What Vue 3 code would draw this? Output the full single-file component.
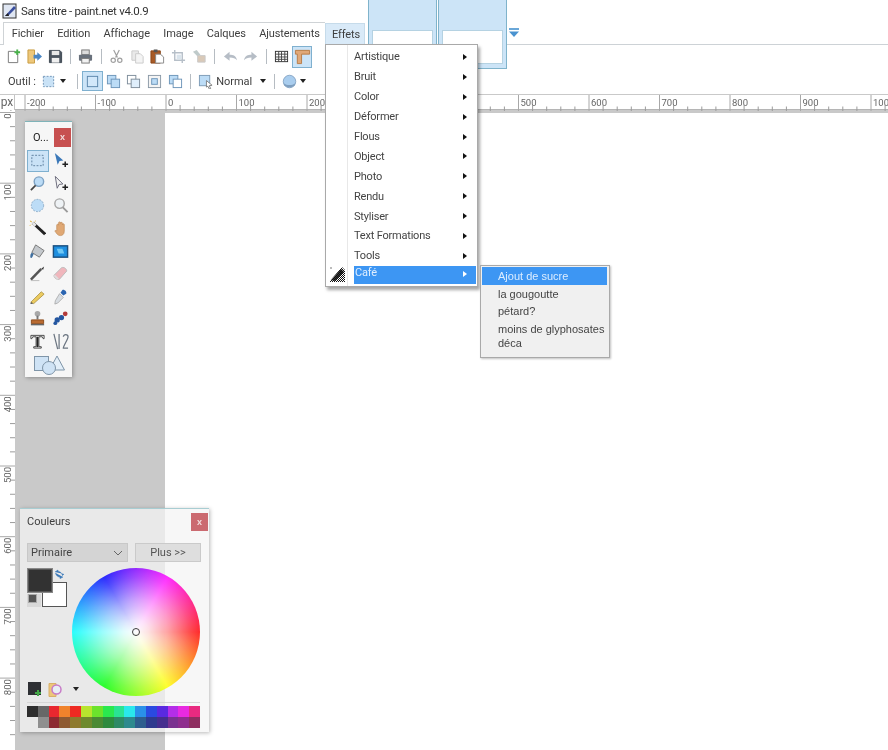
<script setup>
const hMajor = [];
const hMinor = [];
for (let v = -240; v <= 1040; v += 20) {
  const x = 166 + v * 0.705;
  if (v % 100 === 0) hMajor.push({ v, x });
  else hMinor.push({ x, tall: (v % 100 + 100) % 100 === 20 });
}
const vMajor = [];
const vMinor = [];
for (let v = 0; v <= 880; v += 20) {
  const y = 2.5 + v * 0.707;
  if (v % 100 === 0) vMajor.push({ v, y });
  else vMinor.push({ y });
}
const row1 = ['#2e2e2e','#676767','#e8272f','#f0832c','#ee2a22','#b8e42e','#6ce32c','#2ae84e','#2ae393','#2ae8ec','#2a90e8','#2a4ae0','#5a2ae0','#b42ee8','#e82ae0','#e82a80'];
const row2 = ['transparent','#8f8f8f','#8c2a32','#8e5a32','#8e7a2e','#6e8a2e','#4a8a34','#2e8a3e','#2e8a66','#2e8a8e','#2e5e8e','#2e3a8e','#462e8e','#7a3290','#8e2e8e','#8e2e60'];
const items = ['Artistique','Bruit','Color','Déformer','Flous','Object','Photo','Rendu','Styliser','Text Formations','Tools'];
</script>

<template>
  <div class="app">
    <header class="titlebar">
      <svg class="appicon" viewBox="0 0 16 16" width="16" height="16">
        <rect x="1" y="1" width="13" height="14" fill="#dfe6f2" stroke="#333"/>
        <path d="M3 13 L12 3 L14 5 L6 13 Z" fill="#3a4f9e"/>
        <path d="M3 13 L6 10 L7 13 Z" fill="#222"/>
      </svg>
      <span>Sans titre - paint.net v4.0.9</span>
    </header>

    <nav class="menubar">
      <div class="mb-edge"></div>
      <div class="mb-tabs">
        <span class="mi">Fichier</span><span class="mi">Edition</span><span class="mi">Affichage</span><span class="mi">Image</span><span class="mi">Calques</span><span class="mi">Ajustements</span>
      </div>
      <span class="mi mi-active">Effets</span>
      <div class="mb-rest"></div>
    </nav>

    <div class="toolbar tb1">
      <span class="slot"><svg viewBox="0 0 16 16"><path d="M2.5 2.5h7l3 3v9h-10z" fill="#fff" stroke="#777"/><path d="M11 .5h2v2h2v2h-2v2h-2v-2H9v-2h2z" fill="#49b04a"/></svg></span>
      <span class="slot"><svg viewBox="0 0 16 16"><path d="M1 1h7v14H1z" fill="#edc77a" stroke="#c99a3f"/><path d="M7 6h4V3.5L16 8l-5 4.500V10H7z" fill="#4a86c4"/></svg></span>
      <span class="slot"><svg viewBox="0 0 16 16"><path d="M1.500 1.500h11l2 2v11h-13z" fill="#4c5560" stroke="#3c4550"/><rect x="4" y="2" width="8" height="4.500" fill="#e8e8e8"/><rect x="4" y="9.500" width="8" height="5" fill="#f0f0f0"/></svg></span>
      <i class="sep"></i>
      <span class="slot"><svg viewBox="0 0 16 16"><rect x="4" y="1" width="8" height="5" fill="#ddd" stroke="#777"/><rect x="1" y="6" width="14" height="6.500" rx="1" fill="#69717c"/><rect x="4" y="10" width="8" height="5" fill="#f2f2f2" stroke="#777"/></svg></span>
      <i class="sep"></i>
      <span class="slot faded"><svg viewBox="0 0 16 16"><path d="M5 1l4 8M11 1L7 9" stroke="#666" stroke-width="1.300" fill="none"/><circle cx="4.500" cy="12" r="2.300" fill="none" stroke="#666" stroke-width="1.300"/><circle cx="11.500" cy="12" r="2.300" fill="none" stroke="#666" stroke-width="1.300"/></svg></span>
      <span class="slot faded"><svg viewBox="0 0 16 16"><path d="M2 2h7v10H2z" fill="#ddd" stroke="#aaa"/><path d="M6 5h5l3 3v7H6z" fill="#eee" stroke="#aaa"/></svg></span>
      <span class="slot"><svg viewBox="0 0 16 16"><path d="M1 2h10v13H1z" fill="#a85a26" stroke="#8a4518"/><rect x="4" y="0.500" width="4" height="3" fill="#555"/><path d="M6 5.500h5l3.500 3v6.500H6z" fill="#fff" stroke="#888"/></svg></span>
      <span class="slot faded"><svg viewBox="0 0 16 16"><path d="M4 1v11h11M1 4h11v11" fill="none" stroke="#8a98a8" stroke-width="1.500"/><rect x="6" y="6" width="5" height="5" fill="#c4d4e2"/></svg></span>
      <span class="slot faded"><svg viewBox="0 0 16 16"><path d="M1 3l4-2 4 5-3 2z" fill="#9aa"/><path d="M6 7h8v7H6z" fill="#c2a98e" stroke="#aaa"/></svg></span>
      <i class="sep"></i>
      <span class="slot faded"><svg viewBox="0 0 16 16"><path d="M1 8l6-5v3c4 0 7 1 8 6-2-2-4-3-8-3v3.500z" fill="#8a96a4"/></svg></span>
      <span class="slot faded"><svg viewBox="0 0 16 16"><path d="M15 8L9 3v3C5 6 2 7 1 12c2-2 4-3 8-3v3.500z" fill="#8a96a4"/></svg></span>
      <i class="sep"></i>
      <span class="slot"><svg viewBox="0 0 16 16"><rect x="1.500" y="2.500" width="13" height="11" fill="#fff" stroke="#333"/><path d="M1.500 5.500h13M1.500 8.500h13M1.500 11h13M5 2.500v11M8 2.500v11M11.500 2.500v11" stroke="#444"/></svg></span>
      <span class="slot on wide"><svg viewBox="0 0 18 18"><path d="M1.500 2.500h15v4H8v10H3.500v-10h-2z" fill="#e0a878" stroke="#b87b46"/></svg></span>
    </div>

    <div class="toolbar tb2">
      <span class="lbl">Outil :</span>
      <span class="slot tool"><svg viewBox="0 0 16 16"><rect x="2.500" y="2.500" width="11" height="11" fill="#c9e2f6" stroke="#6f93b5" stroke-dasharray="2 1.500"/></svg></span>
      <i class="caret"></i>
      <i class="sep"></i>
      <span class="slot on mode"><svg viewBox="0 0 16 16"><rect x="2.500" y="2.500" width="11" height="11" fill="#d2e8fa" stroke="#5a85ab"/></svg></span>
      <span class="slot"><svg viewBox="0 0 16 16"><rect x="1.500" y="1.500" width="9" height="9" fill="#bcdcf6" stroke="#6c94b8"/><rect x="5.500" y="5.500" width="9" height="9" fill="#bcdcf6" stroke="#6c94b8"/></svg></span>
      <span class="slot"><svg viewBox="0 0 16 16"><rect x="1.500" y="1.500" width="9" height="9" fill="#fff" stroke="#7d8c9a"/><rect x="5.500" y="5.500" width="9" height="9" fill="#dfeefb" stroke="#7d8c9a"/></svg></span>
      <span class="slot"><svg viewBox="0 0 16 16"><rect x="1.500" y="1.500" width="13" height="13" fill="#f4f4f4" stroke="#8a98a6"/><rect x="5" y="5" width="6" height="6" fill="#bcdcf6" stroke="#6c94b8"/></svg></span>
      <span class="slot"><svg viewBox="0 0 16 16"><rect x="1.500" y="1.500" width="9" height="9" fill="#bcdcf6" stroke="#6c94b8"/><rect x="5.500" y="5.500" width="9" height="9" fill="#fff" stroke="#6c94b8"/></svg></span>
      <i class="sep"></i>
      <span class="slot"><svg viewBox="0 0 16 16"><rect x="1.500" y="1.500" width="11" height="11" fill="#bcdcf6" stroke="#7d9ab5"/><path d="M9 7l6 5-3 .5 1.500 3-1.500.5-1.500-3L9 14z" fill="#fff" stroke="#666" stroke-width=".8"/></svg></span>
      <span class="lbl normal">Normal</span>
      <i class="caret caret2"></i>
      <i class="sep"></i>
      <span class="slot"><svg viewBox="0 0 18 18"><circle cx="9" cy="9" r="7.500" fill="#a9cdee" stroke="#7f9fbf"/><path d="M2 11c4 3 10 3 14 0l-1 3-4 2H7l-4-2z" fill="#7f9fbf"/></svg></span>
      <i class="caret caret3"></i>
    </div>

    <div class="hruler">
      <svg width="888" height="16">
        <g v-for="t in hMajor" :key="t.v">
          <line :x1="t.x" :x2="t.x" y1="0" y2="16" stroke="#a8a8a8"/>
          <text :x="t.x + 2" y="10.500" class="rt">{{ t.v }}</text>
        </g>
        <line v-for="t in hMinor" :key="t.x" :x1="t.x" :x2="t.x" :y1="t.tall ? 10 : 11.500" y2="16" stroke="#9c9c9c"/>
      </svg>
      <span class="px">px</span>
    </div>

    <main class="work">
      <div class="vruler">
        <svg width="15" height="640">
          <g v-for="t in vMajor" :key="t.v">
            <line x1="0" x2="15" :y1="t.y" :y2="t.y" stroke="#a8a8a8"/>
            <text class="rt" text-anchor="end" :transform="`translate(11 ${t.y + 1}) rotate(-90)`">{{ t.v }}</text>
          </g>
          <line v-for="t in vMinor" :key="t.y" x1="10" x2="15" :y1="t.y" :y2="t.y" stroke="#9c9c9c"/>
        </svg>
      </div>
      <div class="gutter"></div>
      <div class="canvas"></div>
    </main>

    <div class="ghost g1"><div class="ghost-in"></div></div>
    <div class="ghost g2"><div class="ghost-in"></div></div>
    <svg class="more" viewBox="0 0 10 10" width="10" height="10"><path d="M0 0h10v2H0z" fill="#6aa7d8"/><path d="M0 3.500h10L5 9z" fill="#4a93d0"/></svg>

    <div class="menu">
      <div v-for="it in items" :key="it" class="row"><span>{{ it }}</span><i class="tri"></i></div>
      <div class="row row-on"><span>Café</span><i class="tri tri-w"></i></div>
      <svg class="cafe-ic" viewBox="0 0 16 16" width="16" height="16">
        <defs><pattern id="chk" width="2" height="2" patternUnits="userSpaceOnUse"><rect width="2" height="2" fill="#fff"/><rect width="1" height="1" fill="#111"/><rect x="1" y="1" width="1" height="1" fill="#111"/></pattern></defs>
        <path d="M0 16 L13 1 L16 4 V16 Z" fill="url(#chk)"/>
        <path d="M2 14 L12 3 L15 6 L6 15 Z" fill="#111" opacity=".85"/>
        <path d="M1 1h2v2H1z" fill="#bbb"/>
      </svg>
    </div>

    <div class="submenu">
      <div class="sub sub-on">Ajout de sucre</div>
      <div class="sub">la gougoutte</div>
      <div class="sub">pétard?</div>
      <div class="sub sub-last">moins de glyphosates<br>déca</div>
    </div>

    <aside class="tools">
      <div class="tools-head"><span>O...</span><b class="close">x</b></div>
      <div class="tools-grid">
        <span class="t t-on"><svg viewBox="0 0 18 18"><rect x="3" y="3.500" width="12" height="11" fill="#c9e2f6" stroke="#5f7f9e" stroke-dasharray="2 1.500"/></svg></span>
        <span class="t"><svg viewBox="0 0 18 18"><path d="M3 1l9 8-4 .5-2 4z" fill="#3b78b8"/><path d="M11 13h6M14 10v6" stroke="#222" stroke-width="1.600"/></svg></span>
        <span class="t"><svg viewBox="0 0 18 18"><circle cx="10.500" cy="7" r="5" fill="#bcdcf6" stroke="#7da2c4" stroke-width="1.500"/><path d="M7 11l-5 5" stroke="#444" stroke-width="1.800"/></svg></span>
        <span class="t"><svg viewBox="0 0 18 18"><path d="M3.500 1.500l8 8-4 .5-2 4z" fill="#f4f4f4" stroke="#667"/><path d="M11 13h6M14 10v6" stroke="#222" stroke-width="1.600"/></svg></span>
        <span class="t"><svg viewBox="0 0 18 18"><circle cx="9" cy="9" r="6.500" fill="#bcdcf6" stroke="#86a8c6" stroke-dasharray="2 1.200"/></svg></span>
        <span class="t"><svg viewBox="0 0 18 18"><circle cx="8" cy="7" r="5" fill="#eef2f5" stroke="#a6a6a6" stroke-width="1.500"/><path d="M11.500 11l5 5" stroke="#999" stroke-width="2"/></svg></span>
        <span class="t"><svg viewBox="0 0 18 18"><path d="M4 3l13 12" stroke="#222" stroke-width="3"/><path d="M4 3l3 3" stroke="#e6e6e6" stroke-width="3"/><path d="M1 1l2 1M7 1l-1 1M1 6l1-1" stroke="#d9a520"/></svg></span>
        <span class="t"><svg viewBox="0 0 18 18"><path d="M5 10V5.500a1 1 0 0 1 2 0V3a1 1 0 0 1 2 0v.500a1 1 0 0 1 2 0V5a1 1 0 0 1 2 0v7c0 3-2 4.500-4 4.500-3 0-4-2-6-5 1-1 2 0 2 0z" fill="#e0a874" stroke="#c08a56" stroke-width=".7"/></svg></span>
        <span class="t"><svg viewBox="0 0 18 18"><path d="M7 2l9 6-5 7-8-5z" fill="#c4c8cc" stroke="#777"/><path d="M3 10c-2 2-2 5-1 6 2 0 2-3 3-4z" fill="#3f6f9f"/></svg></span>
        <span class="t"><svg viewBox="0 0 18 18"><rect x="1.500" y="3" width="15" height="12" fill="#1e8fe0" stroke="#1b4f7e" stroke-width="1.500"/><path d="M5 6h6l2 5H7z" fill="#70c8f5"/></svg></span>
        <span class="t"><svg viewBox="0 0 18 18"><path d="M2 15.500L13 4" stroke="#555" stroke-width="2.600"/><path d="M13 4l3-2.500-1 3.500z" fill="#333"/><path d="M2 16.500h9" stroke="#bbb"/></svg></span>
        <span class="t"><svg viewBox="0 0 18 18"><path d="M2 11l8-8c2-1.500 6 1 5.500 3.500L8 15c-2 1-6-1-6-4z" fill="#f0b6bc" stroke="#bbb"/><path d="M2.500 11l4 4" stroke="#ddd" stroke-width="2"/></svg></span>
        <span class="t"><svg viewBox="0 0 18 18"><path d="M2 15L13 4l3 2.500L5 16.500z" fill="#eccb60" stroke="#a58b3a" stroke-width=".8"/><path d="M2 15l-.5 2 3-.5z" fill="#444"/></svg></span>
        <span class="t"><svg viewBox="0 0 18 18"><path d="M11 2c2-1 5 2 4 4l-3 2-3-3z" fill="#2a64b0"/><path d="M8 6l4 4-6 6-3 1 .5-3.500z" fill="#d8dde2" stroke="#999" stroke-width=".7"/></svg></span>
        <span class="t"><svg viewBox="0 0 18 18"><circle cx="9" cy="4" r="3" fill="#a8a8a8"/><path d="M8 6h2v4H8z" fill="#777"/><path d="M2.500 10.500h13v4h-13z" fill="#b96a30" stroke="#8a4a1c"/><path d="M2 15.500h14" stroke="#666" stroke-width="1.500"/></svg></span>
        <span class="t"><svg viewBox="0 0 18 18"><circle cx="14" cy="4" r="2.500" fill="#b33a3a"/><circle cx="10" cy="8" r="2.800" fill="#2456a0"/><circle cx="5.500" cy="10.500" r="2.800" fill="#2456a0"/><circle cx="3.500" cy="14" r="2" fill="#2456a0"/></svg></span>
        <span class="t"><svg viewBox="0 0 18 18"><path d="M2 2.500h14v3.500h-1l-1-2H10.500v10.500H13v1.500H5V14.500h2.500V4H4L3 6H2z" fill="#f4f4f4" stroke="#333" stroke-width=".9"/><path d="M8 4h2v11H8z" fill="#222"/></svg></span>
        <span class="t"><svg viewBox="0 0 18 18"><path d="M2 1l4 16M7.500 17V1M12 4c0-3 5-3 5 0 0 3-5 9-5 12h5" fill="none" stroke="#6a7480" stroke-width="1.300"/></svg></span>
        <span class="t t-wide"><svg viewBox="0 0 32 20"><rect x="1" y="1.500" width="14" height="14" fill="#cfe3f5" stroke="#7f95a8"/><path d="M23.500 1L31 15H16z" fill="#e3eff9" stroke="#7f95a8"/><circle cx="15.500" cy="13" r="6.500" fill="#cfe3f5" stroke="#7f95a8"/></svg></span>
      </div>
    </aside>

    <aside class="colors">
      <div class="c-head"><span>Couleurs</span><b class="close close2">x</b></div>
      <div class="c-controls">
        <div class="select"><span>Primaire</span><svg viewBox="0 0 10 6" width="10" height="6"><path d="M1 1l4 4 4-4" fill="none" stroke="#666"/></svg></div>
        <div class="plus">Plus &gt;&gt;</div>
      </div>
      <div class="c-main">
        <div class="swatches">
          <div class="sw-second"></div>
          <div class="sw-first"></div>
          <svg class="swap" viewBox="0 0 10 10" width="10" height="10"><path d="M1 3l3-2v1.500c2 0 4 1.500 4.500 4L10 5M9 8L6 9.500V8C4 8 2 6.500 1.500 4" fill="#3b78b8" stroke="#3b78b8" stroke-width=".6"/></svg>
          <div class="sw-reset"><i></i></div>
        </div>
        <div class="wheel"><div class="wheel-white"></div><i class="marker"></i></div>
      </div>
      <div class="c-tools">
        <svg viewBox="0 0 14 14" width="14" height="14"><rect width="13" height="13" fill="#2e3034"/><path d="M9 8h2v2h2v2h-2v2H9v-2H7v-2h2z" fill="#43a847"/></svg>
        <svg viewBox="0 0 14 14" width="14" height="15"><path d="M1 1h7v13H1z" fill="#edc77a" stroke="#d9b068"/><circle cx="8.500" cy="7" r="4.500" fill="#e8eef5" stroke="#c77ac7" stroke-width="1.500"/></svg>
        <i class="caret caret4"></i>
      </div>
      <div class="palette">
        <i v-for="(c, k) in row1" :key="k" :style="{ background: c }"></i>
        <i v-for="(c, k) in row2" :key="'b' + k" :style="{ background: c }"></i>
      </div>
    </aside>
  </div>
</template>

<style>
html, body { margin: 0; background: #fff; }
</style>

<style scoped>
.app { position: relative; width: 888px; height: 750px; overflow: hidden; display: flex; flex-direction: column; background: #fff; font-family: Roboto, "Open Sans", sans-serif; font-size: 11px; color: #3e3e3e; filter: blur(.3px); }
.titlebar { height: 22px; flex: none; display: flex; align-items: center; gap: 3px; padding-left: 2px; font-size: 11.500px; letter-spacing: -.3px; color: #333; }
.appicon { flex: none; }
.menubar { height: 23px; flex: none; display: flex; letter-spacing: -.1px; }
.mb-edge { width: 3px; border-bottom: 1px solid #cdd2d6; }
.mb-tabs { display: flex; width: 322px; padding-left: 1px; box-sizing: border-box; border-top: 1px solid #cfd3d6; border-left: 1px solid #cfd3d6; align-items: center; }
.mi { padding: 0 6.700px; line-height: 22px; white-space: nowrap; }
.mi-active { background: #d9eaf8; border: 1px solid #c6dbea; border-bottom: 0; height: 22px; line-height: 22px; box-sizing: border-box; padding: 0 6px; width: 40px; margin-top: 1px; }
.mb-rest { flex: 1; border-bottom: 1px solid #cdd2d6; }
.toolbar { flex: none; display: flex; align-items: center; }
.tb1 { height: 23px; padding-left: 3.500px; }
.tb2 { height: 26px; padding-left: 8px; }
.slot { width: 20.700px; height: 20px; display: flex; align-items: center; justify-content: center; flex: none; box-sizing: border-box; }
.slot svg { width: 15px; height: 15px; display: block; }
.slot.faded { opacity: .62; }
.slot.on { background: #cce4f7; border: 1px solid #7fb0cf; }
.slot.wide { height: 22px; }
.slot.wide svg { width: 17px; height: 17px; }
.sep { width: 1px; height: 15px; background: #b6bcc2; margin: 0 4.500px; flex: none; }
.lbl { width: 32px; flex: none; white-space: nowrap; }
.slot.tool { width: 16px; }
.normal { width: 37px; }
.caret { width: 0; height: 0; border: 3.500px solid transparent; border-top: 4px solid #222; border-bottom: 0; margin-left: 4px; margin-right: 6px; flex: none; }
.caret2 { margin-left: 7px; margin-right: 3px; }
.caret3 { margin-left: 0; }
.caret4 { margin: 0 0 0 5px; }
.hruler { height: 16px; flex: none; position: relative; border-top: 1px solid #c9c9c9; box-sizing: border-box; border-bottom: 1px solid #b5b5b5; background: #fff; }
.hruler svg { display: block; position: absolute; left: 0; top: 0; }
.rt { font: 9.500px Roboto, sans-serif; fill: #666; }
.px { position: absolute; left: 0; top: 0; width: 15px; height: 15px; background: #fff; border-right: 1px solid #c4c4c4; box-sizing: border-box; font-size: 12px; line-height: 15px; text-align: center; color: #666; }
.work { flex: 1; display: flex; min-height: 0; }
.vruler { width: 15px; flex: none; background: #fff; overflow: hidden; }
.vruler svg { display: block; }
.gutter { width: 150px; flex: none; background: #c9c9c9; }
.canvas { flex: 1; background: #fff; border-top: 3px solid #c9c9c9; }

.ghost { position: absolute; top: -1px; width: 69px; height: 70px; background: #cce4f7; border: 1px solid #7fb3cb; box-sizing: border-box; display: flex; justify-content: center; }
.g1 { left: 368px; }
.g2 { left: 438px; }
.ghost-in { width: 61px; height: 34px; margin-top: 30px; background: #fff; border: 1px solid #b5d2e2; box-sizing: border-box; }
.more { position: absolute; left: 509px; top: 28px; }

.menu { position: absolute; left: 325px; top: 44px; width: 153px; height: 243px; box-sizing: border-box; background: #fff; border: 1px solid #a9a9a9; box-shadow: 2px 3px 3px rgba(0, 0, 0, .35); padding: 2px 1px 0 28px; display: flex; flex-direction: column; letter-spacing: -.2px; }
.menu::before { content: ""; position: absolute; left: 21px; top: 0; bottom: 0; width: 1px; background: #e8e8e8; }
.row { height: 19.900px; display: flex; align-items: center; justify-content: space-between; padding-right: 9px; flex: none; color: #444; }
.tri { width: 0; height: 0; border: 3.500px solid transparent; border-left: 4px solid #111; border-right: 0; }
.row-on { background: #3d96f3; color: #dfeeff; height: 18px; align-items: flex-start; line-height: 14px; padding-left: 1px; }
.row-on .tri { margin-top: 5px; }
.tri-w { border-left-color: #fff; }
.cafe-ic { position: absolute; left: 3px; top: 221px; }

.submenu { position: absolute; left: 480px; top: 265px; width: 130px; height: 93px; box-sizing: border-box; background: #f0f0f0; border: 1px solid #a9a9a9; box-shadow: 1px 1px 2px rgba(0, 0, 0, .25); padding: 1px 2px 0 1px; font-family: "Liberation Sans", Arial, sans-serif; font-size: 11px; color: #444; }
.sub { height: 17.500px; line-height: 18px; padding-left: 16px; }
.sub-on { background: #3d96f3; color: #dcedff; }
.sub-last { height: auto; line-height: 14px; padding-top: 2px; }

.close { width: 17px; height: 19px; background: #c75050; color: #f2dcdc; font: bold 9px/18px "Liberation Sans", sans-serif; text-align: center; flex: none; }

.tools { position: absolute; left: 25px; top: 121px; width: 47px; height: 256px; box-sizing: border-box; background: #f6f6f6; border-top: 1px solid #7fb3b8; box-shadow: 1px 1px 4px rgba(0, 0, 0, .3); }
.tools-head { display: flex; justify-content: space-between; align-items: center; padding: 5px 1px 0 8px; height: 21px; font-size: 11px; color: #222; }
.tools-grid { display: grid; grid-template-columns: 22.500px 22.500px; grid-auto-rows: 22.600px; padding: 1.500px 0 0 1.500px; }
.t { display: flex; align-items: center; justify-content: center; box-sizing: border-box; }
.t svg { width: 17px; height: 17px; display: block; }
.t-on { background: #cce4f7; border: 1px solid #7fb0cf; }
.t-wide { grid-column: 1 / 3; padding-top: 1px; }
.t-wide svg { width: 33px; height: 20px; }

.colors { position: absolute; left: 20px; top: 508px; width: 189px; height: 224px; box-sizing: border-box; background: rgba(244, 244, 244, .74); border-top: 1px solid #a8cdd2; box-shadow: 1px 1px 4px rgba(0, 0, 0, .28); padding: 0 1px 0 7px; display: flex; flex-direction: column; }
.c-head { display: flex; justify-content: space-between; align-items: center; height: 25px; font-size: 11px; color: #3e3e3e; }
.close2 { background: #cb6a70; height: 18px; }
.c-controls { display: flex; gap: 7px; margin-top: 9px; height: 19px; }
.select { width: 101px; box-sizing: border-box; background: #d4d4d4; border: 1px solid #c8c8c8; display: flex; justify-content: space-between; align-items: center; padding: 0 4px 0 3px; color: #444; }
.plus { width: 66px; box-sizing: border-box; background: #dedede; border: 1px solid #cacaca; text-align: center; line-height: 17px; color: #555; }
.c-main { display: flex; height: 128px; margin-top: 6px; }
.swatches { position: relative; width: 45px; flex: none; }
.sw-first { position: absolute; left: 0; top: 0; width: 26px; height: 25px; box-sizing: border-box; background: #323232; border: 1px solid #888; outline: 1px solid #555; outline-offset: -2px; }
.sw-second { position: absolute; left: 15px; top: 14px; width: 25px; height: 25px; box-sizing: border-box; background: #fff; border: 1px solid #555; }
.swap { position: absolute; left: 27px; top: 1px; }
.sw-reset { position: absolute; left: 0; top: 26px; width: 14px; height: 13px; background: #d8d8d8; }
.sw-reset i { display: block; width: 7px; height: 7px; background: #555; border: 1px solid #aaa; margin-left: 1px; }
.wheel { position: relative; width: 128px; height: 128px; border-radius: 50%; background: conic-gradient(from 90deg, #ff2020, #ffff20, #20ff20, #20ffff, #2020ff, #ff20ff, #ff2020); opacity: .95; flex: none; }
.wheel-white { position: absolute; inset: 0; border-radius: 50%; background: radial-gradient(circle closest-side, #fff 0, rgba(255, 255, 255, .86) 20%, rgba(255, 255, 255, .56) 50%, rgba(255, 255, 255, .15) 85%, rgba(255, 255, 255, 0) 100%); }
.marker { position: absolute; left: 60px; top: 60px; width: 8px; height: 8px; border: 1px solid #333; border-radius: 50%; box-sizing: border-box; }
.c-tools { display: flex; align-items: center; gap: 6px; height: 18px; margin-top: -16px; padding-left: 1px; position: relative; }
.palette { display: grid; grid-template-columns: repeat(16, 1fr); grid-auto-rows: 11px; width: 173px; margin-top: 4px; padding-top: 3px; border-top: 1px solid #d6d6d6; }
.palette i { display: block; }
</style>
